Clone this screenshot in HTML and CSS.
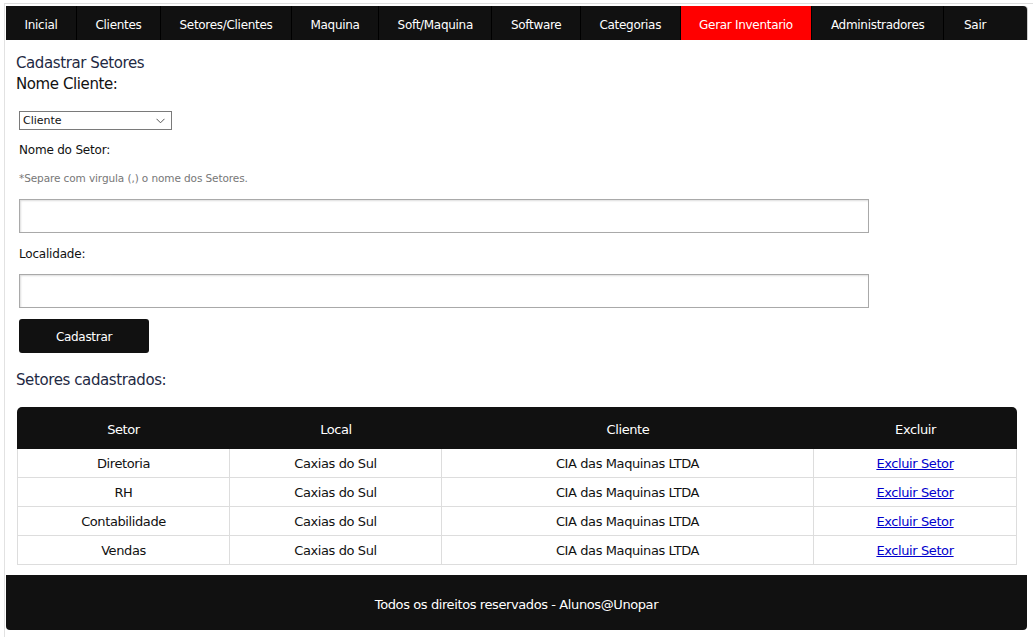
FILE: index.html
```html
<!DOCTYPE html>
<html lang="pt-BR">
<head>
<meta charset="utf-8">
<title>Cadastrar Setores</title>
<link rel="stylesheet" href="styles.css">
</head>
<body>
<div class="page">
  <nav class="menu">
    <a class="menu-item" href="#">Inicial</a>
    <a class="menu-item" href="#">Clientes</a>
    <a class="menu-item" href="#">Setores/Clientes</a>
    <a class="menu-item" href="#">Maquina</a>
    <a class="menu-item" href="#">Soft/Maquina</a>
    <a class="menu-item" href="#">Software</a>
    <a class="menu-item" href="#">Categorias</a>
    <a class="menu-item active" href="#">Gerar Inventario</a>
    <a class="menu-item" href="#">Administradores</a>
    <a class="menu-item last" href="#">Sair</a>
  </nav>

  <main class="content">
    <h1 class="title">Cadastrar Setores</h1>
    <div class="title sub">Nome Cliente:</div>

    <form class="form">
      <div class="select">
        <span>Cliente</span>
        <svg class="chev" width="9" height="6" viewBox="0 0 9 6"><path d="M0.5 0.8 L4.5 4.8 L8.5 0.8" fill="none" stroke="#555" stroke-width="1"/></svg>
      </div>

      <label class="label l-setor">Nome do Setor:</label>
      <p class="hint">*Separe com virgula (,) o nome dos Setores.</p>
      <input class="field f-setor" type="text">

      <label class="label l-local">Localidade:</label>
      <input class="field f-local" type="text">

      <button class="btn" type="button">Cadastrar</button>
    </form>

    <h2 class="title list-title">Setores cadastrados:</h2>

    <table class="grid">
      <colgroup>
        <col class="c1"><col class="c2"><col class="c3"><col class="c4">
      </colgroup>
      <thead>
        <tr><th>Setor</th><th>Local</th><th>Cliente</th><th>Excluir</th></tr>
      </thead>
      <tbody>
        <tr><td>Diretoria</td><td>Caxias do Sul</td><td>CIA das Maquinas LTDA</td><td><a href="#">Excluir Setor</a></td></tr>
        <tr><td>RH</td><td>Caxias do Sul</td><td>CIA das Maquinas LTDA</td><td><a href="#">Excluir Setor</a></td></tr>
        <tr><td>Contabilidade</td><td>Caxias do Sul</td><td>CIA das Maquinas LTDA</td><td><a href="#">Excluir Setor</a></td></tr>
        <tr><td>Vendas</td><td>Caxias do Sul</td><td>CIA das Maquinas LTDA</td><td><a href="#">Excluir Setor</a></td></tr>
      </tbody>
    </table>
  </main>

  <footer class="footer">Todos os direitos reservados - Alunos@Unopar</footer>
</div>
</body>
</html>
```

FILE: styles.css
```css
* { box-sizing: border-box; }

html, body {
  margin: 0;
  padding: 0;
  background: #fff;
}

body {
  font-family: "DejaVu Sans", Verdana, sans-serif;
  color: #111;
  padding: 3px 0 0 0;
}

.page {
  border-top: 1px solid #ddd;
  border-left: 1px solid #e2e2e2;
  margin-left: 4px;
  padding: 2px 6px 7px 1px;
  width: 1029px;
}

/* ---------- menu ---------- */
.menu {
  display: flex;
  height: 34px;
  background: #111;
  border-radius: 0 4px 0 0;
  box-shadow: 1px 0 0 #ccc;
}

.menu-item {
  display: flex;
  align-items: center;
  justify-content: center;
  padding: 3px 18.5px 0 18.5px;
  color: #fff;
  text-decoration: none;
  font-size: 12px;
  letter-spacing: -0.3px;
  border-right: 1px solid #000;
  white-space: nowrap;
}

.menu-item.active {
  background: #ff0000;
}

.menu-item.last {
  flex: 1;
  justify-content: flex-start;
  padding-left: 20px;
  border-right: 0;
}

/* ---------- content ---------- */
.content {
  padding: 0 0 0 10px;
}

.title {
  margin: 0;
  font-weight: normal;
  font-size: 15px;
  line-height: 20px;
  color: #1f2a44;
  letter-spacing: -0.4px;
}

h1.title {
  margin-top: 13px;
}

.title.sub {
  color: #111;
  margin-top: 1px;
}

.form {
  padding-left: 3px;
  display: flex;
  flex-direction: column;
  align-items: flex-start;
}

.select {
  margin-top: 17px;
  width: 153px;
  height: 19px;
  border: 1px solid #7a7a7a;
  display: flex;
  align-items: center;
  justify-content: space-between;
  padding: 0 6px 0 3px;
  font-size: 11px;
  color: #111;
  background: #fff;
}

.label {
  display: block;
  font-size: 12px;
  line-height: 16px;
  letter-spacing: -0.2px;
  color: #111;
}

.l-setor { margin-top: 12px; }
.l-local { margin-top: 13px; }

.hint {
  margin: 13px 0 0 0;
  font-size: 10.5px;
  line-height: 14px;
  color: #777;
  letter-spacing: -0.1px;
}

.field {
  display: block;
  width: 850px;
  height: 34px;
  border: 1px solid #a9a9a9;
  box-shadow: inset 1px 1px 2px #ddd;
  background: #fff;
}

.f-setor { margin-top: 14px; }
.f-local { margin-top: 12px; }

.btn {
  margin-top: 11px;
  width: 130px;
  height: 34px;
  padding-top: 2px;
  background: #111;
  color: #fff;
  border: 0;
  border-radius: 3px;
  font-family: "DejaVu Sans", Verdana, sans-serif;
  font-size: 12px;
  letter-spacing: -0.3px;
}

.list-title {
  margin-top: 17px;
}

/* ---------- table ---------- */
.grid {
  margin: 17px 0 0 1px;
  width: 1000px;
  border-collapse: separate;
  border-spacing: 0;
  font-size: 13px;
  letter-spacing: -0.4px;
}

.c1 { width: 213px; }
.c2 { width: 212px; }
.c3 { width: 372px; }
.c4 { width: 203px; }

.grid th {
  background: #111;
  color: #fff;
  font-weight: normal;
  height: 42px;
  padding: 2px 0 0 0;
  text-align: center;
}

.grid th:first-child { border-top-left-radius: 5px; }
.grid th:last-child { border-top-right-radius: 5px; }

.grid td {
  height: 29px;
  padding: 1px 0 0 0;
  text-align: center;
  border-right: 1px solid #ddd;
  border-bottom: 1px solid #ddd;
  color: #111;
}

.grid td:first-child { border-left: 1px solid #ddd; }

.grid td a {
  color: #0000cc;
  text-decoration: underline;
}

/* ---------- footer ---------- */
.footer {
  margin-top: 10px;
  height: 55px;
  padding-top: 3px;
  background: #111;
  color: #fff;
  border-radius: 0 0 4px 4px;
  display: flex;
  align-items: center;
  justify-content: center;
  font-size: 13px;
  letter-spacing: -0.4px;
}
```
